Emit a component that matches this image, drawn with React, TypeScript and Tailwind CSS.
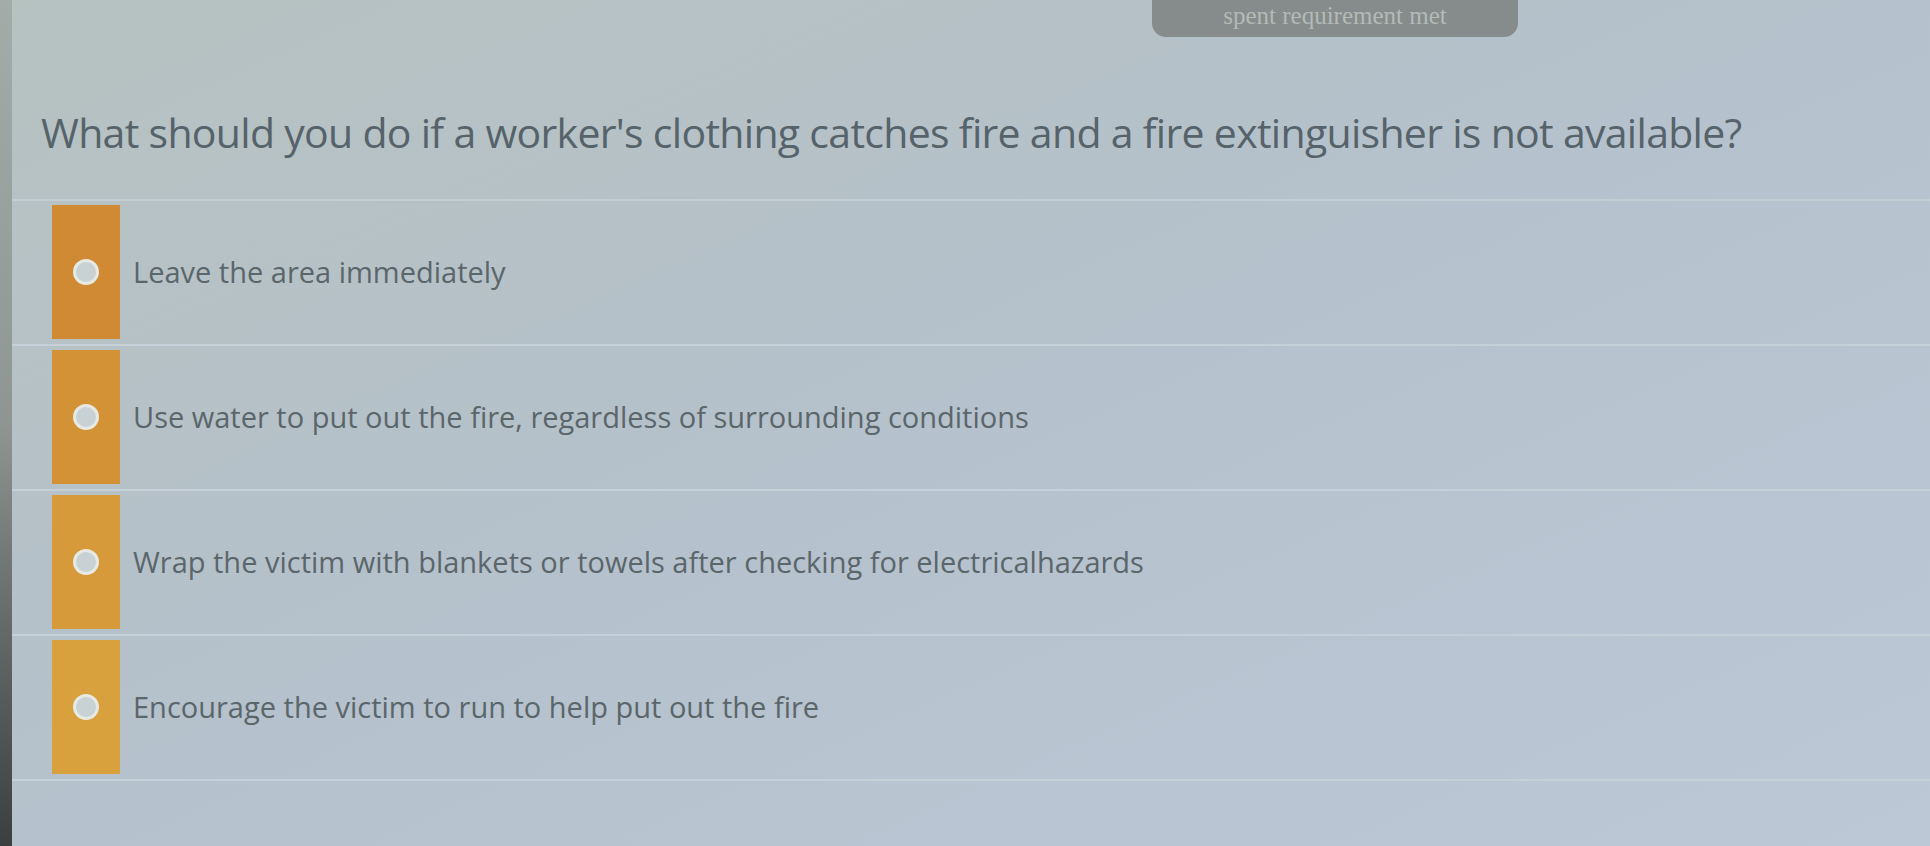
import React from "react";

const options = [
  { text: "Leave the area immediately", bg: "bg-[#d08a34]" },
  { text: "Use water to put out the fire, regardless of surrounding conditions", bg: "bg-[#d39236]" },
  { text: "Wrap the victim with blankets or towels after checking for electricalhazards", bg: "bg-[#d79a3a]" },
  { text: "Encourage the victim to run to help put out the fire", bg: "bg-[#d9a03e]" },
];

export default function App() {
  return (
    <div className="w-[1930px] h-[846px] overflow-hidden flex bg-gradient-to-br from-[#b6c2c0] via-[#b5c1cc] to-[#bcc8d6]">
      <div className="w-[12px] h-full bg-gradient-to-b from-[#a4acaa] via-[#8e9592] to-[#3b3f40]" />
      <div className="flex-1 flex flex-col">
        <div className="h-[37px] flex pl-[1140px]">
          <div className="w-[366px] h-[37px] rounded-b-[14px] bg-[#868c8b] flex items-start justify-center pt-[1px] [font-family:'Liberation_Serif',serif] text-[25px] leading-[30px] text-[#b3bab7]">
            spent requirement met
          </div>
        </div>
        <div className="mt-[71px] pl-[29px] h-[50px] flex items-center [font-family:'Open_Sans',sans-serif] text-[41px] tracking-[-0.7px] text-[#56636a] whitespace-nowrap">
          What should you do if a worker's clothing catches fire and a fire extinguisher is not available?
        </div>
        <div className="mt-[41px] border-b-2 border-[#c3cdd3]" />
        {options.map((o, i) => (
          <div key={i} className="flex items-center py-[4px] pb-[5px] border-b-2 border-[#c6d0d8]">
            <div className={`ml-[40px] w-[68px] h-[134px] ${o.bg} flex items-center justify-center`}>
              <div className="w-[26px] h-[26px] rounded-full bg-[#c8d1d3] border-[3px] border-[#e6e9e4]" />
            </div>
            <div className="ml-[13px] [font-family:'Open_Sans',sans-serif] text-[29px] text-[#5b666b] whitespace-nowrap">
              {o.text}
            </div>
          </div>
        ))}
      </div>
    </div>
  );
}
